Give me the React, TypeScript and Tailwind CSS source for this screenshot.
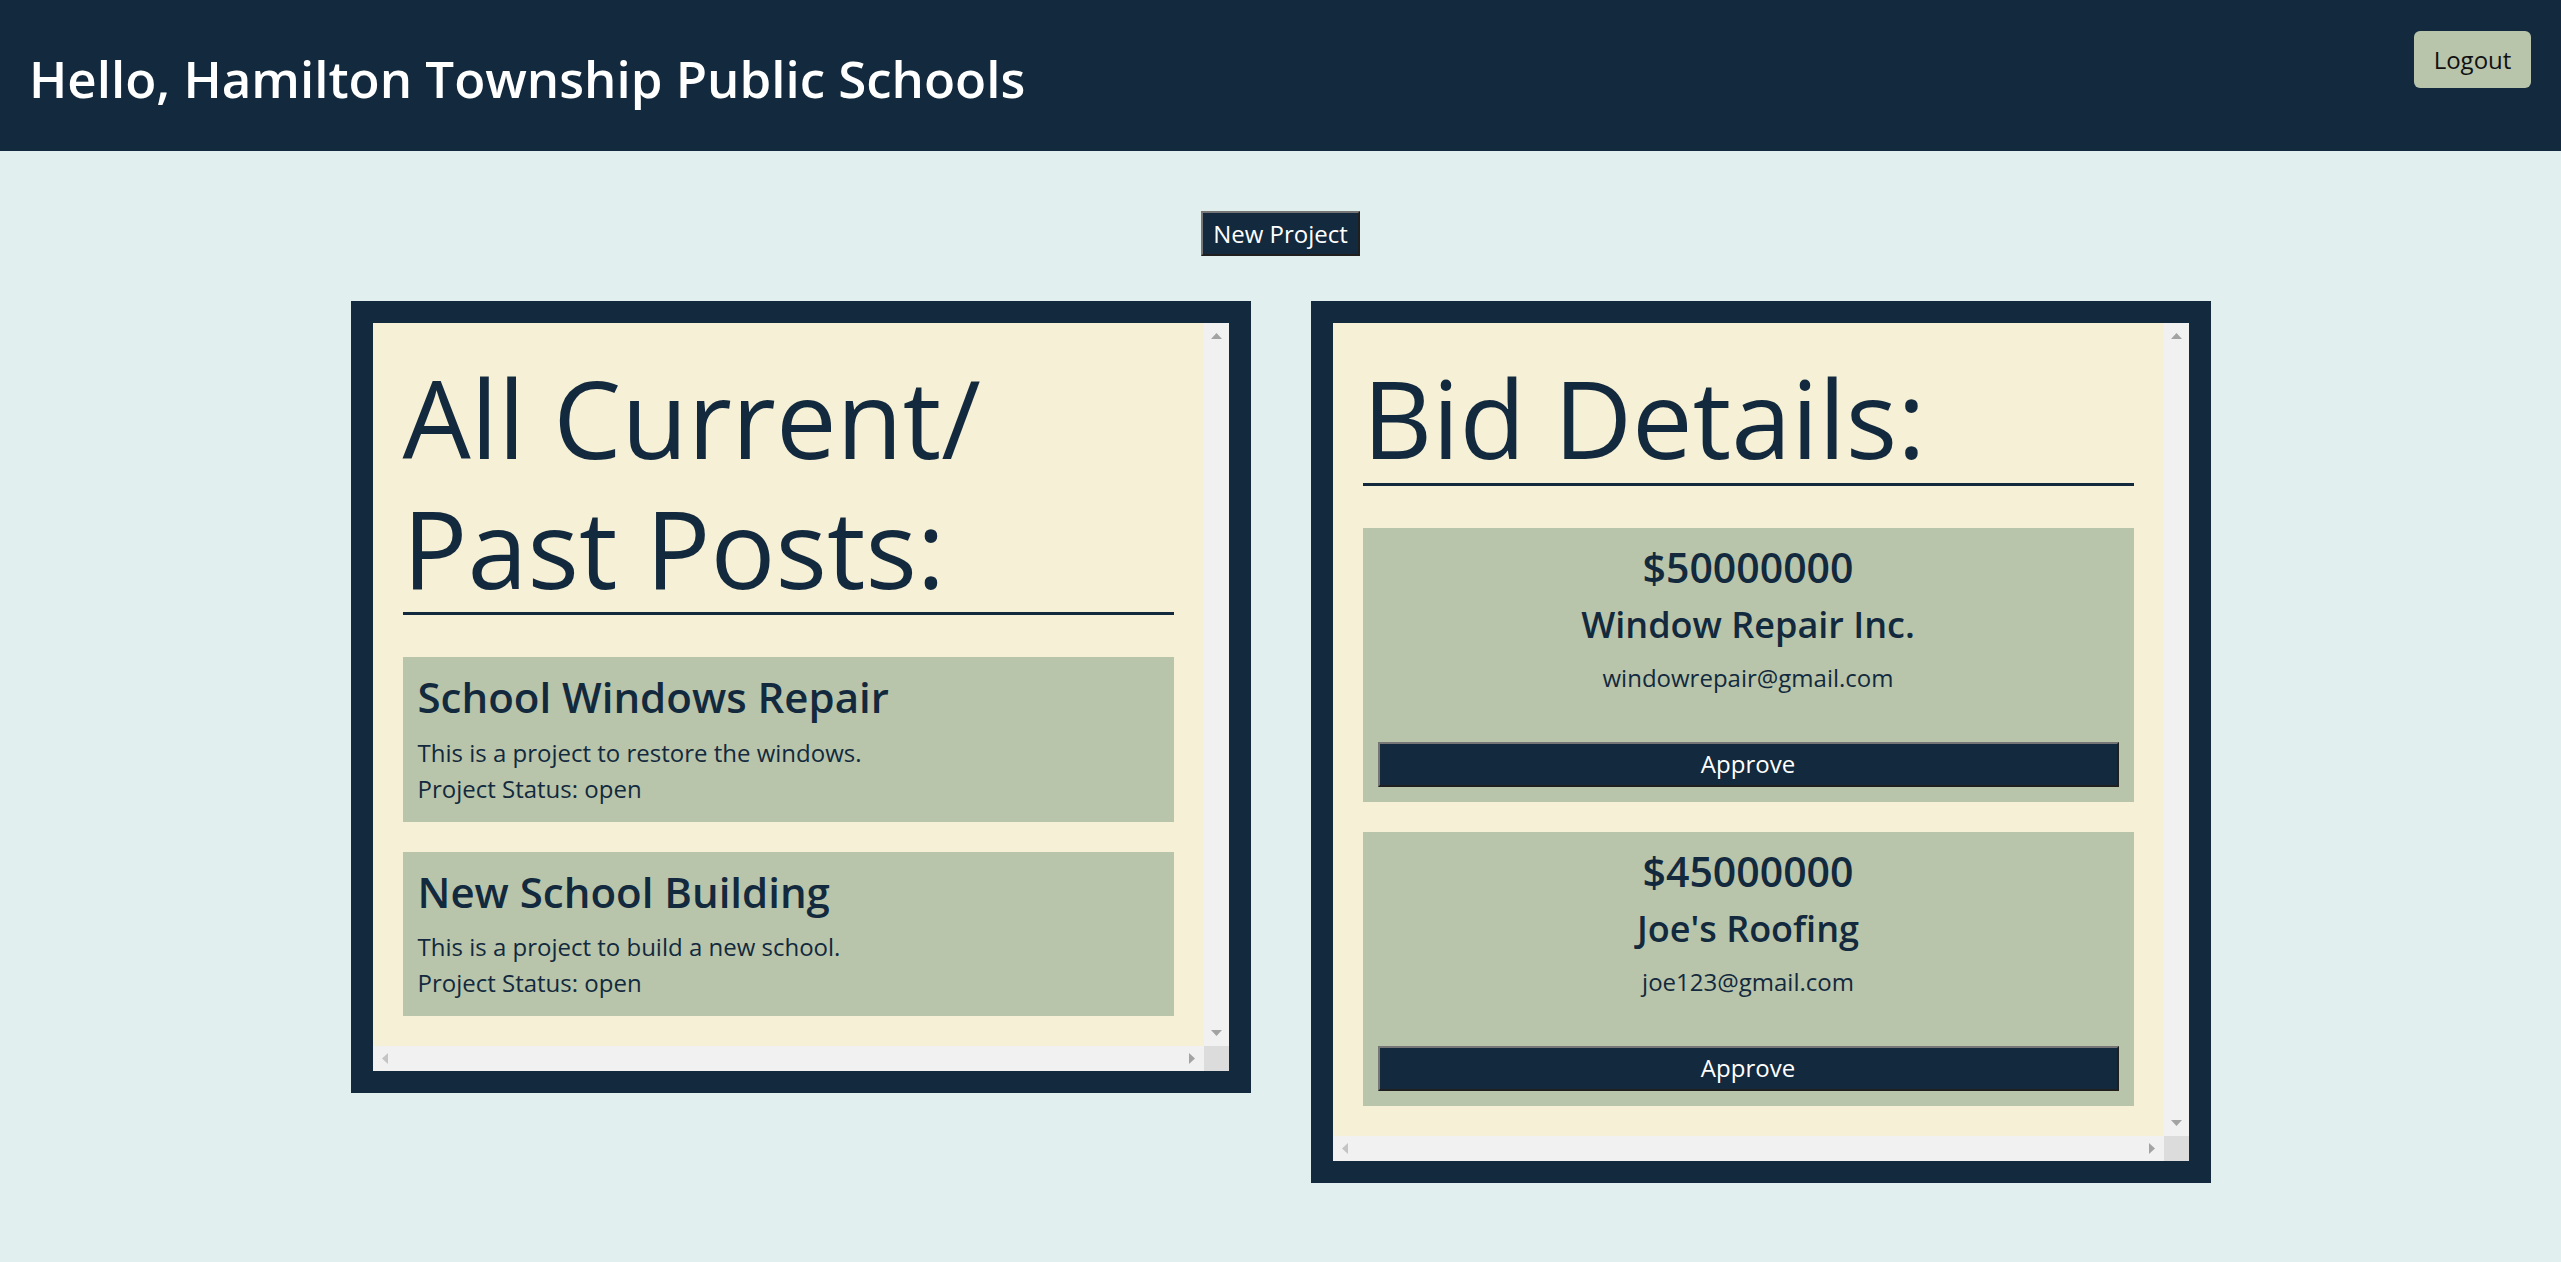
import React from "react";

const posts = [
  {
    title: "School Windows Repair",
    description: "This is a project to restore the windows.",
    status: "open",
  },
  {
    title: "New School Building",
    description: "This is a project to build a new school.",
    status: "open",
  },
];

const bids = [
  { amount: "$50000000", company: "Window Repair Inc.", email: "windowrepair@gmail.com" },
  { amount: "$45000000", company: "Joe's Roofing", email: "joe123@gmail.com" },
];

// classic always-on scrollbars around the panel content
function ScrollBox({ children }: { children: React.ReactNode }) {
  return (
    <div className="grid grid-cols-[1fr_25px] grid-rows-[auto_25px] bg-[#f6f1d6]">
      <div className="p-[30px]">{children}</div>
      <div className="flex flex-col items-center justify-between bg-[#f1f1f1] py-[10px]">
        <svg width="11" height="6" viewBox="0 0 11 6">
          <polygon points="5.5,0 11,6 0,6" fill="#a3a3a3" />
        </svg>
        <svg width="11" height="6" viewBox="0 0 11 6">
          <polygon points="0,0 11,0 5.5,6" fill="#a3a3a3" />
        </svg>
      </div>
      <div className="flex items-center justify-between bg-[#f1f1f1] px-[9px]">
        <svg width="6" height="11" viewBox="0 0 6 11">
          <polygon points="6,0 6,11 0,5.5" fill="#c4c4c4" />
        </svg>
        <svg width="6" height="11" viewBox="0 0 6 11">
          <polygon points="0,0 6,5.5 0,11" fill="#a3a3a3" />
        </svg>
      </div>
      <div className="bg-[#dcdcdc]" />
    </div>
  );
}

export default function App() {
  return (
    <div className="min-h-screen bg-[#e1f0ef] font-['Open_Sans',sans-serif] text-[#13293d]">
      <header className="flex h-[151px] items-start justify-between bg-[#13293d]">
        <h1 className="pl-[29px] pt-[43px] text-[51px] font-semibold leading-[70px] text-white">
          Hello, Hamilton Township Public Schools
        </h1>
        <button className="mr-[30px] mt-[31px] h-[57px] w-[117px] rounded-[6px] bg-[#b8c5ab] text-[24px] text-[#111]">
          Logout
        </button>
      </header>

      <main className="flex flex-col items-center pt-[60px]">
        <button className="h-[45px] border-2 border-t-[#767676] border-l-[#767676] border-r-[#1f1f1f] border-b-[#1f1f1f] bg-[#13293d] px-[10px] text-[24px] leading-[36px] text-white">
          New Project
        </button>

        <div className="mt-[45px] flex items-start gap-[60px]">
          <section className="w-[900px] bg-[#13293d] p-[22px]">
            <ScrollBox>
              <h2 className="border-b-[3px] border-[#13293d] text-[108px] leading-[1.2]">
                All Current/
                <br />
                Past Posts:
              </h2>
              <div className="mt-[42px] flex flex-col gap-[30px]">
                {posts.map((post) => (
                  <div key={post.title} className="bg-[#b8c5ab] p-[15px]">
                    <h3 className="text-[42px] font-semibold leading-[1.2]">{post.title}</h3>
                    <div className="mt-[12px] text-[24px] leading-[36px]">
                      <p>{post.description}</p>
                      <p>Project Status: {post.status}</p>
                    </div>
                  </div>
                ))}
              </div>
            </ScrollBox>
          </section>

          <section className="w-[900px] bg-[#13293d] p-[22px]">
            <ScrollBox>
              <h2 className="border-b-[3px] border-[#13293d] text-[108px] leading-[1.2]">
                Bid Details:
              </h2>
              <div className="mt-[42px] flex flex-col gap-[30px]">
                {bids.map((bid) => (
                  <div key={bid.email} className="bg-[#b8c5ab] p-[15px] text-center">
                    <h3 className="text-[41px] font-semibold leading-[48px]">{bid.amount}</h3>
                    <h4 className="mt-[12px] text-[36px] font-semibold leading-[43px]">
                      {bid.company}
                    </h4>
                    <p className="mt-[14px] text-[24px] leading-[36px]">{bid.email}</p>
                    <button className="mt-[46px] h-[45px] w-full border-2 border-t-[#767676] border-l-[#767676] border-r-[#1f1f1f] border-b-[#1f1f1f] bg-[#13293d] text-[24px] leading-[36px] text-white">
                      Approve
                    </button>
                  </div>
                ))}
              </div>
            </ScrollBox>
          </section>
        </div>
      </main>
    </div>
  );
}
